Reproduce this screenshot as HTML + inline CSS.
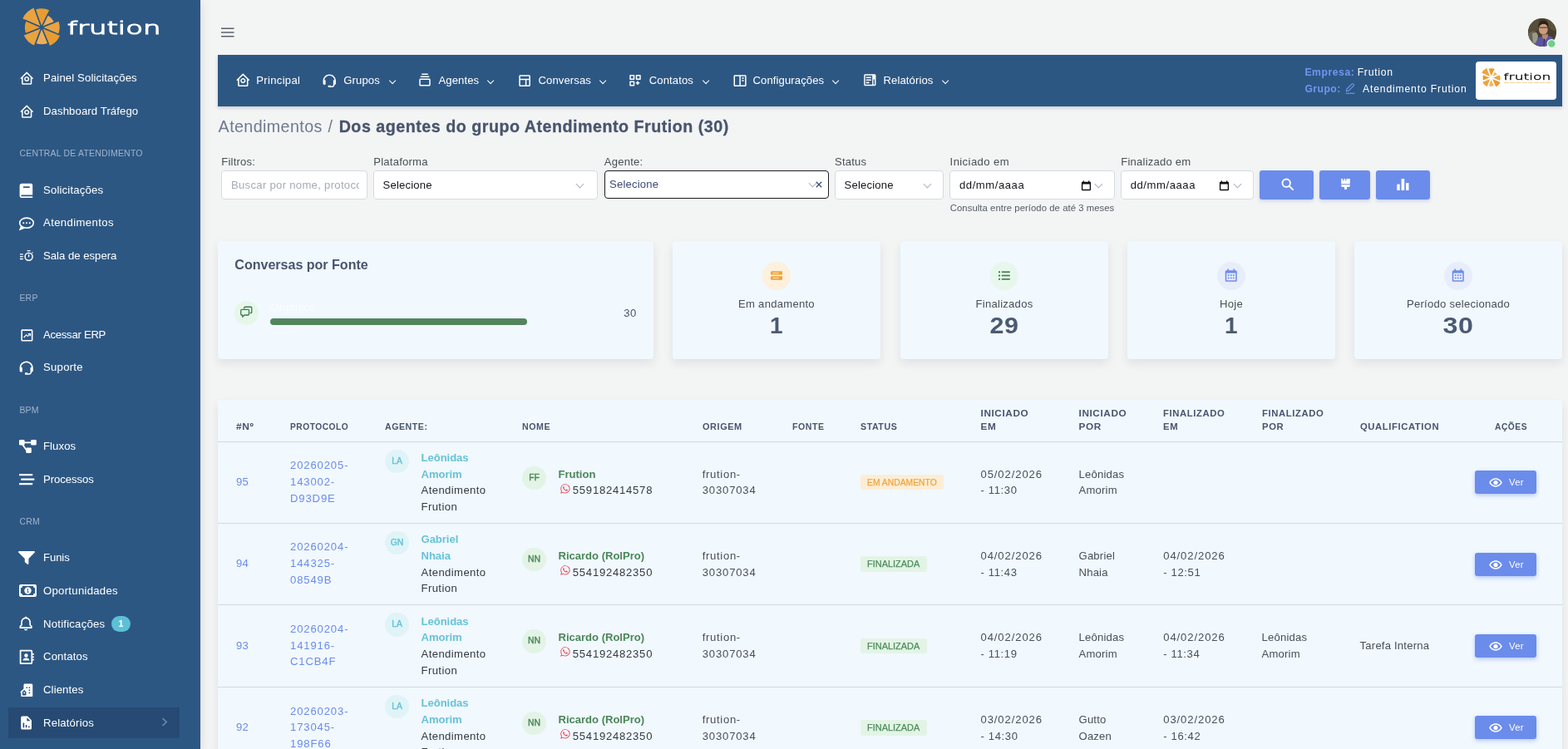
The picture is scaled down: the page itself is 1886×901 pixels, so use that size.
<!DOCTYPE html>
<html lang="pt-BR">
<head>
<meta charset="utf-8">
<title>Atendimentos - Frution</title>
<style>
*{box-sizing:border-box;margin:0;padding:0}
html,body{width:1886px;height:901px;overflow:hidden}
body{background:#f3f4f4;font-family:"Liberation Sans",sans-serif;font-size:13.1px;color:#495057;position:relative;line-height:1.5}
svg{display:block}
.abs{position:absolute}
/* sidebar */
#main,#sidebar{will-change:transform}#sidebar{position:absolute;left:0;top:0;width:241px;height:901px;background:#2d5783;overflow:hidden;box-shadow:0 2px 12px rgba(15,34,58,.13);z-index:2}
.sb-item{position:absolute;left:0;width:241px;height:42px;display:flex;align-items:center;color:#fff;font-size:13.2px;letter-spacing:.1px}
.sb-item .ic{position:absolute;left:22px;top:50%;width:20px;height:20px;margin-top:-10px;fill:#fff}
.sb-item .tx{position:absolute;left:52px;top:50%;transform:translateY(-50%);white-space:nowrap}
.sb-title{position:absolute;left:23.4px;color:#9fb3cc;font-size:10.5px;letter-spacing:.2px;white-space:nowrap;transform:translateY(-50%);margin-top:1px}
.sb-active{position:absolute;left:10px;top:851px;width:206px;height:37px;background:#264a73}
.badge1{position:absolute;left:134px;top:741px;width:23px;height:19px;border-radius:10px;background:#5bc1d7;color:#fff;font-size:10.5px;font-weight:bold;text-align:center;line-height:19px}
/*C1a*/#nav{position:absolute;left:262px;top:66px;width:1617px;height:62px;background:#2d5783;box-shadow:0 2px 4px rgba(20,30,50,.18)}
.nv{position:absolute;top:31px;height:0;color:#fff;font-size:13.100px;white-space:nowrap}
.nv svg{position:absolute;fill:#fff;margin-left:-1.2px}
.nv .t{position:absolute;top:-10.200px;line-height:20px;letter-spacing:.1px}
.chev{position:absolute;top:-3.400px;margin-left:1.2px;width:6.200px;height:6.200px;border-right:1.400px solid #fff;border-bottom:1.400px solid #fff;transform:rotate(45deg) ;transform-origin:center}
#h4{font-size:19.700px;line-height:30px;color:#49556e}
#h4 .lt{color:#6d7a90;letter-spacing:.4px}
#h4 .sl{margin:0 7.400px 0 6.600px}
#h4 b{letter-spacing:.5px;-webkit-text-stroke:.3px #49556e}
/*C1b*/
/*C2a*/.lbl{position:absolute;font-size:13.100px;line-height:20px;color:#495057;white-space:nowrap;letter-spacing:.2px}
.inp{position:absolute;top:205px;height:34.500px;background:#fff;border:1px solid #d5dae2;border-radius:4px}
.inp .ph{position:absolute;top:7.200px;line-height:20px;font-size:13.100px;color:#15161c;white-space:nowrap;letter-spacing:.18px}
.chev.g{margin-left:0;top:11.500px;border-color:#a9b2c0;border-width:1.300px;width:6.800px;height:6.800px}
.btn svg{margin-top:-2px}.btn{position:absolute;top:205px;height:35px;background:#6b8ceb;border-radius:3px;box-shadow:0 2px 4px rgba(107,140,235,.3);display:flex;align-items:center;justify-content:center}
.card{position:absolute;background:#f1f8fe;border-radius:4px;box-shadow:0 5px 12px rgba(15,34,58,.085)}
.card.st{text-align:center}
.ci{position:absolute;left:50%;top:25px;width:34px;height:34px;margin-left:-17px;border-radius:50%;display:flex;align-items:center;justify-content:center}
.cl{position:absolute;left:0;right:0;top:66px;font-size:13.100px;line-height:20px;color:#495057;letter-spacing:.25px}
.cv{position:absolute;left:0;right:0;top:82.800px;font-size:28px;line-height:38px;font-weight:bold;color:#4b5a73;letter-spacing:.5px}
/*C2b*/
/*C3a*/#tbl{position:absolute;left:262px;top:481px;width:1617px;height:431px;background:#f1f8fe;border-radius:4px 4px 0 0;box-shadow:0 5px 12px rgba(15,34,58,.085);overflow:hidden}
.th{position:absolute;bottom:calc(431px - 40.700px);font-size:11.800px;font-weight:bold;color:#49556e;letter-spacing:.6px;line-height:15.800px;white-space:nowrap;transform-origin:0 50%}
.hl{position:absolute;left:0;right:0;height:1px;background:#d4d9e0}
.row{position:absolute;left:0;width:1617px;height:98.400px}
.c{position:absolute;font-size:13.100px;line-height:19.700px;color:#495057;white-space:nowrap;letter-spacing:.2px}
.c.mid{top:50%;transform:translateY(-50%);margin-top:.15px}
.lk{color:#6b8ceb}
.pr{letter-spacing:.86px}
.dt{letter-spacing:.89px}.tm{letter-spacing:.62px}
.og{letter-spacing:.67px}.dg{letter-spacing:.82px}
.agn{color:#68c3d6;letter-spacing:-.05px}
.nmn{color:#4b8759;letter-spacing:-.03px}
.dk{color:#343a40;letter-spacing:.41px}
.ph2{letter-spacing:.75px;color:#343a40}
.av{position:absolute;width:28.500px;height:28.500px;border-radius:50%;font-size:10.400px;font-weight:normal;-webkit-text-stroke:.42px;text-align:center;line-height:28.500px;letter-spacing:0;text-indent:.5px}
.av.ag{background:#e0f4f8;color:#68c3d6}
.av.nm{background:#e3f4e6;color:#4b8759}
.wa{display:inline-block;width:13.800px;height:13.800px;fill:#e8505b;vertical-align:-.2px;margin:0 2.400px 0 1.100px}
.bdg{position:absolute;height:18.600px;line-height:18.600px;padding:0 8.300px;border-radius:3px;font-size:11px;letter-spacing:.3px;white-space:nowrap;-webkit-text-stroke:.25px}
.bw{background:#fdedd6;color:#eea53c;width:100.500px}.bdg span{display:inline-block;transform-origin:0 50%;letter-spacing:0}.bw span{transform:scaleX(.94)}.bs span{transform:scaleX(.995)}.bs{width:79.800px}
.bs{background:#e3f4e6;color:#4b8c5a}
.ver{position:absolute;left:1512px;width:74px;height:27.500px;border-radius:3px;background:#6b8ceb;box-shadow:0 2px 5px rgba(107,140,235,.45);color:#fff;font-size:11.300px}
.ver svg{position:absolute;left:16.800px;top:8.700px;fill:#fff}
.ver span{position:absolute;left:41px;top:.8px;line-height:27.500px;letter-spacing:.3px}
/*C3b*/
</style>
</head>
<body>
<div id="sidebar">
<!--SB0--><svg class="abs" style="left:21.7px;top:5.3px" width="56" height="56" viewBox="-28 -28 56 56"><g stroke="#2d5783" stroke-width="1.55" stroke-linejoin="miter"><path d="M0 0L-23.83 -10.41A26 26 0 0 1 -8.89 -24.43Z" fill="#e9a340"/><path d="M0 0L-8.00 -21.99A23.4 23.4 0 0 1 10.15 -21.09Z" fill="#e89c30"/><path d="M0 0L7.37 -15.32A17 17 0 0 1 15.82 -6.23Z" fill="#ecad58"/><path d="M0 0L20.93 -8.25A22.5 22.5 0 0 1 20.77 8.65Z" fill="#e9a340"/><path d="M0 0L23.08 9.61A25 25 0 0 1 9.61 23.08Z" fill="#e89c30"/><path d="M0 0L8.07 19.39A21 21 0 0 1 -7.53 19.61Z" fill="#ecad58"/><path d="M0 0L-8.60 22.41A24 24 0 0 1 -22.25 8.99Z" fill="#e9a340"/><path d="M0 0L-19.29 7.79A20.8 20.8 0 0 1 -19.06 -8.33Z" fill="#e89c30"/></g></svg>
<svg class="abs" style="left:78px;top:14px" width="120" height="34" viewBox="0 0 120 34"><text x="3" y="27.3" font-family="'DejaVu Sans','Liberation Sans',sans-serif" font-weight="200" font-size="21.8" fill="#fff" textLength="112.5" lengthAdjust="spacingAndGlyphs" stroke="#fff" stroke-width="1.15">frution</text></svg>

<div class="sb-item" style="top:73px"><svg class="ic" viewBox="0 0 24 24" style="left:22.8px;width:18.4px;height:18.4px;margin-top:-9.3px"><path d="M3 13h1v7c0 1.103.897 2 2 2h12c1.103 0 2-.897 2-2v-7h1a1 1 0 0 0 .707-1.707l-9-9a.999.999 0 0 0-1.414 0l-9 9A1 1 0 0 0 3 13zm9-8.586 6 6V20H6v-9.586l6-6z"/><path d="M12 17c2.206 0 4-1.794 4-4s-1.794-4-4-4-4 1.794-4 4 1.794 4 4 4zm0-6c1.084 0 2 .916 2 2s-.916 2-2 2-2-.916-2-2 .916-2 2-2z"/></svg><span class="tx" style="letter-spacing:0.11px">Painel Solicitações</span></div>
<div class="sb-item" style="top:113px"><svg class="ic" viewBox="0 0 24 24" style="left:22.8px;width:18.4px;height:18.4px;margin-top:-9.3px"><path d="M3 13h1v7c0 1.103.897 2 2 2h12c1.103 0 2-.897 2-2v-7h1a1 1 0 0 0 .707-1.707l-9-9a.999.999 0 0 0-1.414 0l-9 9A1 1 0 0 0 3 13zm9-8.586 6 6V20H6v-9.586l6-6z"/><path d="M12 17c2.206 0 4-1.794 4-4s-1.794-4-4-4-4 1.794-4 4 1.794 4 4 4zm0-6c1.084 0 2 .916 2 2s-.916 2-2 2-2-.916-2-2 .916-2 2-2z"/></svg><span class="tx" style="letter-spacing:0.08px">Dashboard Tráfego</span></div>

<div class="sb-title" style="top:184px">CENTRAL DE ATENDIMENTO</div>

<div class="sb-item" style="top:207.6px"><svg class="ic" viewBox="0 0 24 24" style="left:20.9px;width:20.8px;height:20.8px;margin-top:-9.3px"><path d="M6.012 18H21V4a2 2 0 0 0-2-2H6c-1.206 0-3 .799-3 3v14c0 2.201 1.794 3 3 3h15v-2H6.012C5.55 19.988 5 19.805 5 19s.55-.988 1.012-1zM8 6h9v2H8V6z"/></svg><span class="tx" style="letter-spacing:0.15px">Solicitações</span></div>
<div class="sb-item" style="top:247.2px"><svg class="ic" viewBox="0 0 20 17" style="left:21.9px;width:20px;height:17px;margin-top:-7.700px"><ellipse cx="10" cy="7.200" rx="8.300" ry="6.100" fill="none" stroke="#fff" stroke-width="1.600"/><path d="M3 10.800L1.100 15.400c-.2.500.2.900.700.700L7.600 13.700z"/><circle cx="6.300" cy="7.200" r="1.050"/><circle cx="10" cy="7.200" r="1.050"/><circle cx="13.700" cy="7.200" r="1.050"/></svg><span class="tx" style="letter-spacing:0.35px">Atendimentos</span></div>
<div class="sb-item" style="top:286.6px"><svg class="ic" viewBox="0 0 16 13" style="left:24.200px;width:16px;height:13px;margin-top:-6.700px"><circle cx="10.600" cy="7.700" r="4.500" fill="none" stroke="#fff" stroke-width="1.500"/><path d="M8.600 0h4v1.350h-4zM9.950 5h1.300v3.300h-1.300zM14.100 2.900l.9-.9.900.9-.9.900zM0 4.200h3.700v1.350H0zM0 7h3.700v1.350H0zM0 9.800h3.700v1.350H0z"/></svg><span class="tx" style="letter-spacing:-0.02px">Sala de espera</span></div>

<div class="sb-title" style="top:358px">ERP</div>

<div class="sb-item" style="top:382px"><svg class="ic" viewBox="0 0 24 24" style="left:22.6px;width:18.8px;height:18.8px;margin-top:-8.700px"><path d="M3 5v14c0 1.103.897 2 2 2h14c1.103 0 2-.897 2-2V5c0-1.103-.897-2-2-2H5c-1.103 0-2 .897-2 2zm16.001 14H5V5h14l.001 14z"/><path d="M11 10.200l2 2.300 3.300-3.100-.01 1.800h1.700V6.900h-4.300v1.600h1.700L13.100 10.500 11.100 8.100 6.600 12.800l1.300 1.200z" transform="translate(0,2)"/></svg><span class="tx" style="letter-spacing:-0.30px">Acessar ERP</span></div>
<div class="sb-item" style="top:420.6px"><svg class="ic" viewBox="0 0 24 24" style="left:22.200px;width:19.400px;height:19.400px;margin-top:-9px"><path d="M12 2C6.486 2 2 6.486 2 12v4.143C2 17.167 2.897 18 4 18h1a1 1 0 0 0 1-1v-5.143a1 1 0 0 0-1-1h-.908C4.648 6.987 7.978 4 12 4s7.352 2.987 7.908 6.857H19a1 1 0 0 0-1 1V18c0 1.103-.897 2-2 2h-2v-1h-4v3h6c2.206 0 4-1.794 4-4 1.103 0 2-.833 2-1.857V12c0-5.514-4.486-10-10-10z"/></svg><span class="tx" style="letter-spacing:0.23px">Suporte</span></div>

<div class="sb-title" style="top:493px">BPM</div>

<div class="sb-item" style="top:515.5px"><svg class="ic" viewBox="0 0 21 16" style="left:22.6px;width:21px;height:16px;margin-top:-8px"><rect x="0" y="0" width="6.6" height="6.6" rx="1.3"/><rect x="14.2" y="0" width="6.6" height="6.6" rx="1.3"/><rect x="8.2" y="9.4" width="6.6" height="6.6" rx="1.3"/><path d="M5 2.4h11v1.9H5zM3.300 6.2l1.600-.950 4.900 6.900-1.600.950z"/></svg><span class="tx" style="letter-spacing:0.06px">Fluxos</span></div>
<div class="sb-item" style="top:556px"><svg class="ic" viewBox="0 0 20 16" style="left:22.6px;width:20px;height:16px;margin-top:-6.600px"><rect x="0" y="0" width="16.2" height="2.300" rx=".6"/><rect x="2.200" y="5.500" width="16.200" height="2.300" rx=".6"/><rect x="0" y="11" width="16.2" height="2.300" rx=".6"/></svg><span class="tx" style="letter-spacing:-0.08px">Processos</span></div>

<div class="sb-title" style="top:627px">CRM</div>

<div class="sb-item" style="top:649.6px"><svg class="ic" viewBox="0 0 20 16" style="left:22.2px;width:20px;height:16px;margin-top:-7.4px"><path d="M1.2 0h17.600c1 0 1.500 1.100.850 1.850L12.400 9.100V15c0 .7-.8 1.200-1.400.7l-2.800-2.200a1 1 0 0 1-.4-.8V9.100L.35 1.850C-.3 1.100.2 0 1.200 0z"/></svg><span class="tx" style="letter-spacing:-0.12px">Funis</span></div>
<div class="sb-item" style="top:690px"><svg class="ic" viewBox="0 0 21 15" style="left:22.5px;width:21px;height:15px;margin-top:-7.800px"><path fill-rule="evenodd" d="M2 0h17a2 2 0 0 1 2 2v11a2 2 0 0 1-2 2H2a2 2 0 0 1-2-2V2a2 2 0 0 1 2-2zm2.200 1.900A2.300 2.300 0 0 1 1.900 4.200v6.600a2.300 2.300 0 0 1 2.300 2.300h12.600a2.300 2.300 0 0 1 2.300-2.300V4.200a2.300 2.300 0 0 1-2.300-2.300z"/><path fill-rule="evenodd" d="M10.500 3.300a4.200 4.200 0 1 1 0 8.400 4.200 4.200 0 0 1 0-8.400zm-.9 1.900v1h.6v2.600h-.7v1h2.200v-1H11V5.200z"/></svg><span class="tx" style="letter-spacing:0.26px">Oportunidades</span></div>
<div class="sb-item" style="top:730px"><svg class="ic" viewBox="0 0 24 24" style="left:21.100px;width:20.200px;height:20.200px;margin-top:-10.700px"><path d="M19 13.586V10c0-3.217-2.185-5.927-5.145-6.742C13.562 2.520 12.846 2 12 2s-1.562.52-1.855 1.258C7.185 4.074 5 6.783 5 10v3.586l-1.707 1.707A.996.996 0 0 0 3 16v2a1 1 0 0 0 1 1h16a1 1 0 0 0 1-1v-2a.996.996 0 0 0-.293-.707L19 13.586zM19 17H5v-.586l1.707-1.707A.996.996 0 0 0 7 14v-4c0-2.757 2.243-5 5-5s5 2.243 5 5v4c0 .266.105.52.293.707L19 16.414V17zm-7 5a2.980 2.980 0 0 0 2.818-2H9.182A2.980 2.980 0 0 0 12 22z"/></svg><span class="tx" style="letter-spacing:0.21px">Notificações</span></div>
<div class="badge1">1</div>
<div class="sb-item" style="top:768.7px"><svg class="ic" viewBox="0 0 24 24" style="left:22.400px;width:20.600px;height:20.600px;margin-top:-10.200px"><path d="M21 2H6a2 2 0 0 0-2 2v3H2v2h2v2H2v2h2v2H2v2h2v3a2 2 0 0 0 2 2h15a1 1 0 0 0 1-1V3a1 1 0 0 0-1-1zm-1 18H6V4h14v16z" transform="translate(24,0) scale(-1,1)"/><path d="M11 12.500a2.600 2.600 0 1 0 0-5.200 2.600 2.600 0 0 0 0 5.200zM6.500 16.400v.6h9v-.6c0-1.700-2-3.100-4.500-3.100s-4.500 1.400-4.500 3.100z"/></svg><span class="tx" style="letter-spacing:0.11px">Contatos</span></div>
<div class="sb-item" style="top:809px"><svg class="ic" viewBox="0 0 24 24" style="left:22.500px;width:18.600px;height:18.600px;margin-top:-9.400px"><path d="M18.991 2H9.010C7.899 2 7 2.899 7 4.010v5.637l-4.702 4.642A1 1 0 0 0 3 16v5a1 1 0 0 0 1 1h16a1 1 0 0 0 1-1V4.009C21 2.899 20.102 2 18.991 2zm-8.069 13.111V20H5v-5.568l2.987-2.949 2.935 3.003v.625zM13 9h-2V7h2v2zm4 8h-2v-2h2v2zm0-4h-2v-2h2v2zm0-4h-2V7h2v2z"/><path d="M7 15h2v2H7z"/></svg><span class="tx" style="letter-spacing:0.10px">Clientes</span></div>
<div class="sb-active"></div>
<div class="sb-item" style="top:848.600px"><svg class="ic" viewBox="0 0 24 24" style="left:22.400px;width:19.200px;height:19.200px;margin-top:-9.800px"><path d="M18 22a2 2 0 0 0 2-2V8l-6-6H6a2 2 0 0 0-2 2v16a2 2 0 0 0 2 2h12zM13 4l5 5h-5V4zM7 12h2v7H7v-7zm4 3h2v4h-2v-4zm4 2h2v2h-2v-2z" fill-rule="evenodd"/></svg><span class="tx" style="letter-spacing:0.16px">Relatórios</span>
<svg class="abs" style="left:194px;top:14.500px;fill:none;stroke:#6f8bab;stroke-width:1.600" width="8" height="11" viewBox="0 0 8 11"><path d="M1.500 1l4.700 4.500L1.500 10"/></svg></div>
<!--SB1-->
</div>
<div id="main">
<!--M1a--><svg class="abs" style="left:266px;top:32.800px" width="16" height="12" viewBox="0 0 16 12"><path d="M0 .4h15.500v1.500H0zM0 5.200h15.500v1.500H0zM0 10h15.500v1.500H0z" fill="#5a6270"/></svg>

<!-- avatar -->
<svg class="abs" style="left:1838px;top:22px" width="36" height="36" viewBox="0 0 36 36">
<defs><clipPath id="avc"><circle cx="17" cy="17" r="17"/></clipPath></defs>
<g clip-path="url(#avc)">
<rect width="34" height="34" fill="#463d2e"/>
<path d="M0 0h13v12l-5 5-8 1z" fill="#574e39"/>
<path d="M22 0h12v16l-6-2-5-6z" fill="#5a5238"/>
<path d="M0 18l7-3 4 3 1 16H0z" fill="#6a6650"/>
<path d="M5 18l5-1 2 4-1 8-5 1z" fill="#9a9a8c"/>
<path d="M9 34c0-8 3.500-12 9-12.500l3 2 3.500-2.500c5 1 9 5 9.500 13z" fill="#5a559f"/>
<path d="M16.500 20l1.500 4.500 3 1.500 2.500-3 .5-4z" fill="#b98a6c"/>
<ellipse cx="18.300" cy="13" rx="5.400" ry="6.600" fill="#cb9b7d"/>
<path d="M12.300 11.500c-.5-6 3-8.800 6.500-8.800 3.800 0 6.500 3 5.400 8.300-1.200-3-2.500-4-5.500-4.200-3 0-5 1.500-6.400 4.700z" fill="#2a211c"/>
<path d="M13.200 11.200h10.500" stroke="#3a2e2a" stroke-width=".9" fill="none"/>
<path d="M19.500 24.500l-.5 8" stroke="#2a2440" stroke-width=".9" fill="none"/>
</g>
<circle cx="28.200" cy="30.500" r="5.600" fill="#f3f4f4"/><circle cx="28.200" cy="30.500" r="4.300" fill="#6fd088"/>
</svg>

<div id="nav">
 <div class="nv" style="left:22px"><svg viewBox="0 0 24 24" style="left:0;top:-10px;width:18.600px;height:18.600px"><path d="M3 13h1v7c0 1.103.897 2 2 2h12c1.103 0 2-.897 2-2v-7h1a1 1 0 0 0 .707-1.707l-9-9a.999.999 0 0 0-1.414 0l-9 9A1 1 0 0 0 3 13zm9-8.586 6 6V20H6v-9.586l6-6z"/><path d="M12 17c2.206 0 4-1.794 4-4s-1.794-4-4-4-4 1.794-4 4 1.794 4 4 4zm0-6c1.084 0 2 .916 2 2s-.916 2-2 2-2-.916-2-2 .916-2 2-2z"/></svg><span class="t" style="left:24.300px;letter-spacing:.3px">Principal</span></div>
 <div class="nv" style="left:126px"><svg viewBox="0 0 24 24" style="left:.6px;top:-9.300px;width:18.500px;height:18.500px"><path d="M12 2C6.486 2 2 6.486 2 12v4.143C2 17.167 2.897 18 4 18h1a1 1 0 0 0 1-1v-5.143a1 1 0 0 0-1-1h-.908C4.648 6.987 7.978 4 12 4s7.352 2.987 7.908 6.857H19a1 1 0 0 0-1 1V18c0 1.103-.897 2-2 2h-2v-1h-4v3h6c2.206 0 4-1.794 4-4 1.103 0 2-.833 2-1.857V12c0-5.514-4.486-10-10-10z"/></svg><span class="t" style="left:25.300px">Grupos</span><i class="chev" style="left:79.500px"></i></div>
 <div class="nv" style="left:241px"><svg viewBox="0 0 24 24" style="left:.5px;top:-9.600px;width:18px;height:18px"><path d="M19 10H5c-1.103 0-2 .897-2 2v8c0 1.103.897 2 2 2h14c1.103 0 2-.897 2-2v-8c0-1.103-.897-2-2-2zM5 20v-8h14l.002 8H5zM5 6h14v2H5zM7 2h10v2H7z"/></svg><span class="t" style="left:24.500px">Agentes</span><i class="chev" style="left:83.300px"></i></div>
 <div class="nv" style="left:361px"><svg viewBox="0 0 24 24" style="left:.2px;top:-9.400px;width:18.200px;height:18.200px"><path d="M19 3H5c-1.103 0-2 .897-2 2v14c0 1.103.897 2 2 2h14c1.103 0 2-.897 2-2V5c0-1.103-.897-2-2-2zm0 2 .001 4H5V5h14zM5 11h8v8H5v-8zm10 8v-8h4.001l.001 8H15z"/></svg><span class="t" style="left:24.500px">Conversas</span><i class="chev" style="left:97.500px"></i></div>
 <div class="nv" style="left:494px"><svg viewBox="0 0 24 24" style="left:.3px;top:-8.600px;width:18px;height:18px"><path d="M10 3H4a1 1 0 0 0-1 1v6a1 1 0 0 0 1 1h6a1 1 0 0 0 1-1V4a1 1 0 0 0-1-1zM9 9H5V5h4v4zm11-6h-6a1 1 0 0 0-1 1v6a1 1 0 0 0 1 1h6a1 1 0 0 0 1-1V4a1 1 0 0 0-1-1zm-1 6h-4V5h4v4zm-9 4H4a1 1 0 0 0-1 1v6a1 1 0 0 0 1 1h6a1 1 0 0 0 1-1v-6a1 1 0 0 0-1-1zm-1 6H5v-4h4v4zm8-6h-2v2h-2v2h2v2h2v-2h2v-2h-2z" transform="translate(0,-.5)"/></svg><span class="t" style="left:24.800px">Contatos</span><i class="chev" style="left:88.500px"></i></div>
 <div class="nv" style="left:619px"><svg viewBox="0 0 24 24" style="left:.8px;top:-9.300px;width:18.200px;height:18.200px"><path d="M20 3H4c-1.103 0-2 .897-2 2v14c0 1.103.897 2 2 2h16c1.103 0 2-.897 2-2V5c0-1.103-.897-2-2-2zM4 19V5h7v14H4zm9 0V5h7l.001 14H13z"/><path d="M15 7h3v2h-3zm0 4h3v2h-3z"/></svg><span class="t" style="left:24.500px">Configurações</span><i class="chev" style="left:120.300px"></i></div>
 <div class="nv" style="left:776px"><svg viewBox="0 0 24 24" style="left:.1px;top:-9.800px;width:18.600px;height:18.600px"><path d="M19.875 3H4.125C2.953 3 2 3.897 2 5v14c0 1.103.953 2 2.125 2h15.750C21.047 21 22 20.103 22 19V5c0-1.103-.953-2-2.125-2zM16 19H4V5h12zm4 0h-2V11h2z" transform="translate(1,0) scale(.92,1)"/><path d="M6 7h8v2H6zm0 4h8v2H6zm0 4h5v2H6z"/></svg><span class="t" style="left:24.500px">Relatórios</span><i class="chev" style="left:95.200px"></i></div>

 <div class="abs" style="left:1307.400px;top:10.900px;font-size:12.200px;line-height:20.200px;color:#fff;white-space:nowrap;letter-spacing:.1px"><b style="color:#7196f0;letter-spacing:.55px">Empresa:</b><span style="position:absolute;left:63.300px;letter-spacing:.73px">Frution</span><br><b style="color:#7196f0;letter-spacing:.45px">Grupo:</b><span style="position:absolute;left:69.600px;letter-spacing:.83px">Atendimento Frution</span></div>
 <svg class="abs" style="left:1356px;top:33.500px" width="12" height="13" viewBox="0 0 12 13" fill="none" stroke="#7196f0" stroke-width="1.150"><path d="M.6 12.300h10.800" /><path d="M1.300 9.800l.7-2.800 5.900-5.900c.5-.5 1.300-.5 1.800 0l.4.400c.5.500.5 1.300 0 1.800L4.200 9.200z" stroke-linejoin="round"/></svg>
 <div class="abs" style="left:1513px;top:8px;width:97px;height:46px;background:#fff;border-radius:4px">
  <svg class="abs" style="left:4px;top:4.600px" width="29.200" height="29.200" viewBox="-28 -28 56 56"><g stroke="#fff" stroke-width="3" stroke-linejoin="miter"><path d="M0 0L-23.83 -10.41A26 26 0 0 1 -8.89 -24.43Z" fill="#eda43f"/><path d="M0 0L-8.00 -21.99A23.4 23.4 0 0 1 10.15 -21.09Z" fill="#eb9c2e"/><path d="M0 0L7.37 -15.32A17 17 0 0 1 15.82 -6.23Z" fill="#f0b562"/><path d="M0 0L20.93 -8.25A22.5 22.5 0 0 1 20.77 8.65Z" fill="#eda43f"/><path d="M0 0L23.08 9.61A25 25 0 0 1 9.61 23.08Z" fill="#eb9c2e"/><path d="M0 0L8.07 19.39A21 21 0 0 1 -7.53 19.61Z" fill="#f0b562"/><path d="M0 0L-8.60 22.41A24 24 0 0 1 -22.25 8.99Z" fill="#eda43f"/><path d="M0 0L-19.29 7.79A20.8 20.8 0 0 1 -19.06 -8.33Z" fill="#eb9c2e"/></g></svg>
  <svg class="abs" style="left:32px;top:8px" width="62" height="22" viewBox="0 0 62 22"><text x="1.500" y="14.200" font-family="'DejaVu Sans','Liberation Sans',sans-serif" font-weight="200" font-size="11" fill="#111" textLength="57" lengthAdjust="spacingAndGlyphs" stroke="#111" stroke-width=".4">frution</text><path d="M2 17.600h56" stroke="#eda43f" stroke-width=".7" stroke-dasharray="6 1.200" opacity=".8"/></svg>
 </div>
</div>

<div class="abs" id="h4" style="left:262.600px;top:136.500px;white-space:nowrap"><span class="lt">Atendimentos</span><span class="lt sl">/</span><b>Dos agentes do grupo Atendimento Frution (30)</b></div>
<!--M1b-->
<!--M2a--><div class="lbl" style="left:266.300px;top:185px">Filtros:</div>
<div class="lbl" style="left:449.300px;top:185px">Plataforma</div>
<div class="lbl" style="left:726.800px;top:185px">Agente:</div>
<div class="lbl" style="left:1004px;top:185px">Status</div>
<div class="lbl" style="left:1142.600px;top:185px;letter-spacing:.4px">Iniciado em</div>
<div class="lbl" style="left:1348.300px;top:185px">Finalizado em</div>

<div class="inp" style="left:266px;width:175.500px"><span class="ph" style="left:11px;color:#a4acb8;width:154px;overflow:hidden;letter-spacing:.3px">Buscar por nome, protocolo</span></div>
<div class="inp" style="left:449px;width:269.500px"><span class="ph" style="left:10.500px">Selecione</span><i class="chev g" style="left:243.500px"></i></div>
<div class="inp" style="left:726.500px;top:204.500px;width:270.500px;height:34.500px;border:1.600px solid #1d1d22"><span class="ph" style="left:5.500px;top:6.800px;color:#3b4a7c;">Selecione</span><i class="chev g" style="left:246.500px;top:11.300px"></i>
<svg class="abs" style="left:253.300px;top:12.400px" width="8" height="8" viewBox="0 0 8 8"><path d="M.8.800l6.400 6.400M7.200.800L.8 7.200" stroke="#3b4a7c" stroke-width="1.300"/></svg></div>
<div class="inp" style="left:1004px;width:130.800px"><span class="ph" style="left:10.500px">Selecione</span><i class="chev g" style="left:106.500px"></i></div>
<div class="inp" style="left:1142.300px;width:198.500px"><span class="ph" style="left:10.700px;letter-spacing:.55px">dd/mm/aaaa</span>
<svg class="abs" style="left:156.500px;top:10.500px" width="13" height="13" viewBox="0 0 13 13"><path d="M2.600.5h1.500v1.300h4.800V.5h1.500v1.300h.5c.7 0 1.200.5 1.200 1.200v8c0 .7-.5 1.200-1.200 1.200H2.100c-.7 0-1.200-.5-1.200-1.200v-8c0-.7.5-1.200 1.200-1.200h.5zm-.3 4.100v6.200h8.400V4.600z" fill="#111"/></svg><i class="chev g" style="left:174.500px"></i></div>
<div class="inp" style="left:1348.200px;width:159.500px"><span class="ph" style="left:10.500px;letter-spacing:.55px">dd/mm/aaaa</span>
<svg class="abs" style="left:116.500px;top:10.500px" width="13" height="13" viewBox="0 0 13 13"><path d="M2.600.5h1.500v1.300h4.800V.5h1.500v1.300h.5c.7 0 1.200.5 1.200 1.200v8c0 .7-.5 1.200-1.200 1.200H2.100c-.7 0-1.200-.5-1.200-1.200v-8c0-.7.5-1.200 1.200-1.200h.5zm-.3 4.100v6.200h8.400V4.600z" fill="#111"/></svg><i class="chev g" style="left:135.500px"></i></div>
<div class="abs" style="left:1142.800px;top:242.200px;font-size:11.300px;line-height:16px;color:#545b66;white-space:nowrap;letter-spacing:.06px">Consulta entre período de até 3 meses</div>

<div class="btn" style="left:1515px;width:65px"><svg width="15" height="15" viewBox="0 0 15 15" fill="none" stroke="#fff" stroke-width="1.900" style="margin-left:1px"><circle cx="6.200" cy="6.200" r="4.700"/><path d="M9.800 9.800l4.300 4.300" stroke-linecap="round"/></svg></div>
<div class="btn" style="left:1587px;width:61px"><svg width="11" height="13.600" viewBox="0 0 11 14" fill="#fff" style="margin-left:2.400px" preserveAspectRatio="none"><path d="M.2 0h1.900v2.200h1.300V0h1.700v2.200h1.300V0h4.400v6.400H.2z"/><path d="M.2 7.500h10.600v1.300c0 .8-.6 1.400-1.400 1.400H7v1.900c0 .9-.7 1.600-1.500 1.600S4 13 4 12.100v-1.900H1.600C.8 10.200.2 9.600.2 8.800z"/></svg></div>
<div class="btn" style="left:1655px;width:65px"><svg width="15" height="14" viewBox="0 0 15 14" fill="#fff"><rect x=".3" y="6.500" width="3.400" height="7.500" rx=".5"/><rect x="5.600" y="0" width="3.600" height="14" rx=".5"/><rect x="11.100" y="5" width="3.400" height="9" rx=".5"/></svg></div>

<!-- cards -->
<div class="card" style="left:262px;top:290px;width:524px;height:142px">
 <div class="abs" style="left:20.300px;top:17.200px;font-size:16.100px;font-weight:bold;color:#49556e;letter-spacing:-.03px;white-space:nowrap;line-height:22px">Conversas por Fonte</div>
 <div class="abs" style="left:19.500px;top:72px;width:29px;height:29px;border-radius:50%;background:#e6f7ea"></div>
 <svg class="abs" style="left:27.100px;top:78.200px" width="14.500" height="14.500" viewBox="0 0 14 14" fill="none" stroke="#3f7a4d" stroke-width="1.250" stroke-linejoin="round"><path d="M4.600 3.400V2.100c0-.5.400-.9.900-.9h6.900c.5 0 .9.400.9.900v5.200c0 .5-.4.900-.9.900h-1.200"/><path d="M1.600 4.200h7.600c.5 0 .9.400.9.900v4.600c0 .5-.4.900-.9.900H4.900l-2.300 2.200v-2.200h-1c-.5 0-.9-.4-.9-.9V5.100c0-.5.400-.9.900-.9z"/></svg>
 <div class="abs" style="left:63.500px;top:69.800px;font-size:13.100px;color:#fafdff;white-space:nowrap;letter-spacing:.1px">Orgânico</div>
 <div class="abs" style="left:62.800px;top:93px;width:309.200px;height:8px;border-radius:4px;background:#53855d"></div>
 <div class="abs" style="right:20px;top:76.500px;font-size:13.100px;color:#49556e;letter-spacing:.6px">30</div>
</div>

<div class="card st" style="left:809px;top:290px;width:250px;height:142px"><div class="ci" style="background:#fdf0dc"><svg width="14.600" height="11" viewBox="0 0 14 12" fill="#eea33c" preserveAspectRatio="none" style="margin-top:-1.600px"><rect x="0" y=".3" width="14" height="4.700" rx="1.200"/><rect x="0" y="6.900" width="14" height="4.700" rx="1.200"/><rect x="2.300" y="2.200" width="7" height=".9" fill="#fdecd0"/><rect x="2.300" y="8.800" width="7" height=".9" fill="#fdecd0"/></svg></div><div class="cl">Em andamento</div><div class="cv">1</div></div>
<div class="card st" style="left:1083px;top:290px;width:250px;height:142px"><div class="ci" style="background:#e8f7eb"><svg width="14" height="11" viewBox="0 0 14 11" fill="#3f7a4d" style="margin-top:-2px"><rect x="0" y=".2" width="2" height="2" rx=".4"/><rect x="3.800" y=".4" width="10" height="1.600"/><rect x="0" y="4.500" width="2" height="2" rx=".4"/><rect x="3.800" y="4.700" width="10" height="1.600"/><rect x="0" y="8.800" width="2" height="2" rx=".4"/><rect x="3.800" y="9" width="10" height="1.600"/></svg></div><div class="cl">Finalizados</div><div class="cv" style="transform:scaleX(1.09)">29</div></div>
<div class="card st" style="left:1356px;top:290px;width:250px;height:142px"><div class="ci" style="background:#e8edfc"><svg width="15.500" height="16.500" viewBox="0 0 15 16" style="margin-top:-1.500px"><path d="M3.200.5h1.700v1.600h5.200V.5h1.700v1.600h.9c.9 0 1.600.7 1.600 1.600v10c0 .9-.7 1.600-1.600 1.600H2.300c-.9 0-1.600-.7-1.600-1.600v-10c0-.9.700-1.600 1.600-1.600h.9zM2.200 5.400v8.100c0 .2.200.4.400.4h9.800c.2 0 .4-.2.400-.4V5.400z" fill="#6b8ceb" fill-rule="evenodd"/><g fill="#6b8ceb"><rect x="3.700" y="7" width="1.700" height="1.700"/><rect x="6.650" y="7" width="1.700" height="1.700"/><rect x="9.600" y="7" width="1.700" height="1.700"/><rect x="3.700" y="10.200" width="1.700" height="1.700"/><rect x="6.650" y="10.200" width="1.700" height="1.700"/><rect x="9.600" y="10.200" width="1.700" height="1.700"/></g></svg></div><div class="cl">Hoje</div><div class="cv">1</div></div>
<div class="card st" style="left:1629px;top:290px;width:250px;height:142px"><div class="ci" style="background:#e8edfc"><svg width="15.500" height="16.500" viewBox="0 0 15 16" style="margin-top:-1.500px"><path d="M3.200.5h1.700v1.600h5.200V.5h1.700v1.600h.9c.9 0 1.600.7 1.600 1.600v10c0 .9-.7 1.600-1.600 1.600H2.300c-.9 0-1.600-.7-1.600-1.600v-10c0-.9.700-1.600 1.600-1.600h.9zM2.200 5.400v8.100c0 .2.200.4.400.4h9.800c.2 0 .4-.2.400-.4V5.400z" fill="#6b8ceb" fill-rule="evenodd"/><g fill="#6b8ceb"><rect x="3.700" y="7" width="1.700" height="1.700"/><rect x="6.650" y="7" width="1.700" height="1.700"/><rect x="9.600" y="7" width="1.700" height="1.700"/><rect x="3.700" y="10.200" width="1.700" height="1.700"/><rect x="6.650" y="10.200" width="1.700" height="1.700"/><rect x="9.600" y="10.200" width="1.700" height="1.700"/></g></svg></div><div class="cl">Período selecionado</div><div class="cv" style="transform:scaleX(1.15)">30</div></div>
<!--M2b-->
<!--M3a--><div id="tbl"><div class="th" style="left:22px;transform:scaleX(1.02)">#Nº</div><div class="th" style="left:87px;transform:scaleX(0.865)">PROTOCOLO</div><div class="th" style="left:201px;transform:scaleX(0.899)">AGENTE:</div><div class="th" style="left:366px;transform:scaleX(0.901)">NOME</div><div class="th" style="left:582.75px;transform:scaleX(0.929)">ORIGEM</div><div class="th" style="left:690.75px;transform:scaleX(0.897)">FONTE</div><div class="th" style="left:772.5px;transform:scaleX(0.903)">STATUS</div><div class="th" style="left:917.5px;transform:scaleX(1.0)">INICIADO<br>EM</div><div class="th" style="left:1035.5px;transform:scaleX(1.0)">INICIADO<br>POR</div><div class="th" style="left:1137.25px;transform:scaleX(0.96)">FINALIZADO<br>EM</div><div class="th" style="left:1255.5px;transform:scaleX(0.96)">FINALIZADO<br>POR</div><div class="th" style="left:1373.6px;transform:scaleX(0.958)">QUALIFICATION</div><div class="th" style="left:1536.4px;transform:scaleX(0.87)">AÇÕES</div><div class="hl" style="top:49.750px"></div><div class="hl" style="top:147.9px"></div><div class="hl" style="top:246.0px"></div><div class="hl" style="top:344.9px"></div><div class="row" style="top:50.25px">
<div class="c lk" style="left:22px;top:38.6px">95</div>
<div class="c lk pr" style="left:87px;top:19.1px">20260205-<br>143002-<br>D93D9E</div>
<div class="av ag" style="left:201px;top:9.35px">LA</div>
<div class="c" style="left:244.500px;top:9.75px"><b class="agn">Leônidas<br>Amorim</b><br><span class="dk">Atendimento<br>Frution</span></div>
<div class="av nm" style="left:366px;top:29.35px">FF</div>
<div class="c" style="left:409.500px;top:29.45px"><b class="nmn">Frution</b><br><svg class="wa" viewBox="0 0 24 24"><path d="M12.04 2C6.58 2 2.13 6.45 2.13 11.91c0 1.75.46 3.45 1.32 4.95L2.05 22l5.25-1.38c1.45.79 3.08 1.21 4.74 1.21 5.46 0 9.91-4.45 9.91-9.91 0-2.650-1.030-5.140-2.900-7.010A9.820 9.820 0 0 0 12.040 2zm.01 1.670c2.200 0 4.260.860 5.820 2.420a8.230 8.230 0 0 1 2.410 5.830c0 4.540-3.700 8.230-8.240 8.230-1.480 0-2.930-.39-4.190-1.150l-.3-.17-3.120.82.830-3.040-.2-.32a8.190 8.190 0 0 1-1.260-4.380c.010-4.540 3.700-8.240 8.250-8.240z"/><path d="M8.530 7.330c-.16 0-.43.060-.66.310-.22.250-.87.860-.87 2.070 0 1.220.89 2.390 1 2.560.14.170 1.760 2.670 4.250 3.730.59.270 1.050.42 1.410.53.590.19 1.130.16 1.560.1.480-.07 1.460-.6 1.670-1.180.21-.58.210-1.070.15-1.180-.07-.1-.23-.16-.48-.27-.25-.14-1.470-.74-1.690-.82-.23-.08-.37-.12-.56.120-.16.250-.64.810-.78.970-.15.170-.29.190-.53.070-.26-.13-1.060-.39-2-1.230-.74-.66-1.230-1.470-1.380-1.720-.12-.24-.01-.39.110-.5.110-.11.270-.29.370-.44.130-.14.170-.25.250-.41.080-.17.040-.31-.020-.43-.06-.11-.56-1.350-.77-1.840-.2-.48-.4-.42-.56-.43-.14 0-.3-.01-.47-.01z"/></svg><span class="ph2">559182414578</span></div>
<div class="c og" style="left:582.75px;top:29.45px">frution-<br><span class="dg">30307034</span></div>
<div class="bdg bw" style="left:772.750px;top:39.65px"><span>EM ANDAMENTO</span></div>
<div class="c dt" style="left:917.5px;top:29.45px">05/02/2026<br><span class="tm">- 11:30</span></div>
<div class="c " style="left:1035.5px;top:29.45px">Leônidas<br>Amorim</div>


<div class="ver" style="top:34.85px"><svg class="eye" viewBox="0 0 16 11" width="16" height="11"><path d="M8 .3C4.300.3 1.500 2.700.2 5.500 1.500 8.300 4.300 10.700 8 10.700s6.500-2.400 7.800-5.200C14.500 2.700 11.700.3 8 .3zm0 8.900c-3 0-5.100-1.900-6.100-3.700C2.900 3.700 5 1.800 8 1.800s5.100 1.900 6.100 3.700c-1 1.800-3.100 3.700-6.100 3.700z"/><circle cx="8" cy="5.500" r="2.600"/></svg><span>Ver</span></div>
</div>
<div class="row" style="top:148.4px">
<div class="c lk" style="left:22px;top:38.6px">94</div>
<div class="c lk pr" style="left:87px;top:19.1px">20260204-<br>144325-<br>08549B</div>
<div class="av ag" style="left:201px;top:9.35px">GN</div>
<div class="c" style="left:244.500px;top:9.75px"><b class="agn">Gabriel<br>Nhaia</b><br><span class="dk">Atendimento<br>Frution</span></div>
<div class="av nm" style="left:366px;top:29.35px">NN</div>
<div class="c" style="left:409.500px;top:29.45px"><b class="nmn">Ricardo (RolPro)</b><br><svg class="wa" viewBox="0 0 24 24"><path d="M12.04 2C6.58 2 2.13 6.45 2.13 11.91c0 1.75.46 3.45 1.32 4.95L2.05 22l5.25-1.38c1.45.79 3.08 1.21 4.74 1.21 5.46 0 9.91-4.45 9.91-9.91 0-2.650-1.030-5.140-2.900-7.010A9.820 9.820 0 0 0 12.040 2zm.01 1.670c2.200 0 4.260.860 5.820 2.420a8.230 8.230 0 0 1 2.410 5.830c0 4.540-3.700 8.230-8.240 8.230-1.480 0-2.930-.39-4.190-1.150l-.3-.17-3.120.82.830-3.040-.2-.32a8.190 8.190 0 0 1-1.260-4.380c.010-4.540 3.700-8.240 8.250-8.240z"/><path d="M8.530 7.330c-.16 0-.43.060-.66.310-.22.250-.87.860-.87 2.070 0 1.220.89 2.390 1 2.560.14.170 1.760 2.670 4.250 3.730.59.270 1.050.42 1.410.53.590.19 1.130.16 1.560.1.480-.07 1.460-.6 1.670-1.180.21-.58.210-1.070.15-1.180-.07-.1-.23-.16-.48-.27-.25-.14-1.470-.74-1.690-.82-.23-.08-.37-.12-.56.120-.16.250-.64.810-.78.970-.15.170-.29.190-.53.070-.26-.13-1.060-.39-2-1.230-.74-.66-1.230-1.470-1.380-1.720-.12-.24-.01-.39.110-.5.110-.11.270-.29.370-.44.130-.14.170-.25.250-.41.080-.17.040-.31-.020-.43-.06-.11-.56-1.350-.77-1.840-.2-.48-.4-.42-.56-.43-.14 0-.3-.01-.47-.01z"/></svg><span class="ph2">554192482350</span></div>
<div class="c og" style="left:582.75px;top:29.45px">frution-<br><span class="dg">30307034</span></div>
<div class="bdg bs" style="left:772.750px;top:39.65px"><span>FINALIZADA</span></div>
<div class="c dt" style="left:917.5px;top:29.45px">04/02/2026<br><span class="tm">- 11:43</span></div>
<div class="c " style="left:1035.5px;top:29.45px">Gabriel<br>Nhaia</div>
<div class="c dt" style="left:1137.25px;top:29.45px">04/02/2026<br><span class="tm">- 12:51</span></div>

<div class="ver" style="top:35.8px"><svg class="eye" viewBox="0 0 16 11" width="16" height="11"><path d="M8 .3C4.300.3 1.500 2.700.2 5.500 1.500 8.300 4.300 10.700 8 10.700s6.500-2.400 7.800-5.200C14.500 2.700 11.700.3 8 .3zm0 8.900c-3 0-5.100-1.900-6.100-3.700C2.900 3.700 5 1.800 8 1.800s5.100 1.900 6.100 3.700c-1 1.800-3.100 3.700-6.100 3.700z"/><circle cx="8" cy="5.500" r="2.600"/></svg><span>Ver</span></div>
</div>
<div class="row" style="top:246.5px">
<div class="c lk" style="left:22px;top:39.0px">93</div>
<div class="c lk pr" style="left:87px;top:19.5px">20260204-<br>141916-<br>C1CB4F</div>
<div class="av ag" style="left:201px;top:9.75px">LA</div>
<div class="c" style="left:244.500px;top:10.15px"><b class="agn">Leônidas<br>Amorim</b><br><span class="dk">Atendimento<br>Frution</span></div>
<div class="av nm" style="left:366px;top:29.75px">NN</div>
<div class="c" style="left:409.500px;top:29.85px"><b class="nmn">Ricardo (RolPro)</b><br><svg class="wa" viewBox="0 0 24 24"><path d="M12.04 2C6.58 2 2.13 6.45 2.13 11.91c0 1.75.46 3.45 1.32 4.95L2.05 22l5.25-1.38c1.45.79 3.08 1.21 4.74 1.21 5.46 0 9.91-4.45 9.91-9.91 0-2.650-1.030-5.140-2.900-7.010A9.820 9.820 0 0 0 12.040 2zm.01 1.670c2.200 0 4.260.860 5.820 2.420a8.230 8.230 0 0 1 2.410 5.830c0 4.540-3.700 8.230-8.240 8.230-1.480 0-2.930-.39-4.190-1.150l-.3-.17-3.120.82.830-3.040-.2-.32a8.190 8.190 0 0 1-1.260-4.380c.010-4.540 3.700-8.240 8.250-8.240z"/><path d="M8.530 7.330c-.16 0-.43.060-.66.310-.22.250-.87.860-.87 2.070 0 1.220.89 2.390 1 2.560.14.170 1.760 2.670 4.250 3.730.59.270 1.050.42 1.410.53.590.19 1.130.16 1.560.1.480-.07 1.460-.6 1.670-1.180.21-.58.210-1.070.15-1.180-.07-.1-.23-.16-.48-.27-.25-.14-1.470-.74-1.690-.82-.23-.08-.37-.12-.56.120-.16.250-.64.810-.78.970-.15.170-.29.190-.53.070-.26-.13-1.060-.39-2-1.230-.74-.66-1.230-1.470-1.380-1.720-.12-.24-.01-.39.110-.5.110-.11.270-.29.370-.44.130-.14.170-.25.250-.41.080-.17.040-.31-.020-.43-.06-.11-.56-1.350-.77-1.840-.2-.48-.4-.42-.56-.43-.14 0-.3-.01-.47-.01z"/></svg><span class="ph2">554192482350</span></div>
<div class="c og" style="left:582.75px;top:29.85px">frution-<br><span class="dg">30307034</span></div>
<div class="bdg bs" style="left:772.750px;top:40.05px"><span>FINALIZADA</span></div>
<div class="c dt" style="left:917.5px;top:29.85px">04/02/2026<br><span class="tm">- 11:19</span></div>
<div class="c " style="left:1035.5px;top:29.85px">Leônidas<br>Amorim</div>
<div class="c dt" style="left:1137.25px;top:29.85px">04/02/2026<br><span class="tm">- 11:34</span></div>
<div class="c " style="left:1255.5px;top:29.85px">Leônidas<br>Amorim</div>
<div class="c " style="left:1373.6px;top:39.0px">Tarefa Interna</div>
<div class="ver" style="top:35.6px"><svg class="eye" viewBox="0 0 16 11" width="16" height="11"><path d="M8 .3C4.300.3 1.500 2.700.2 5.500 1.500 8.300 4.300 10.700 8 10.700s6.500-2.400 7.800-5.200C14.500 2.700 11.700.3 8 .3zm0 8.900c-3 0-5.100-1.900-6.100-3.700C2.900 3.700 5 1.800 8 1.800s5.100 1.900 6.100 3.700c-1 1.800-3.100 3.700-6.100 3.700z"/><circle cx="8" cy="5.500" r="2.600"/></svg><span>Ver</span></div>
</div>
<div class="row" style="top:345.4px">
<div class="c lk" style="left:22px;top:38.75px">92</div>
<div class="c lk pr" style="left:87px;top:19.25px">20260203-<br>173045-<br>198F66</div>
<div class="av ag" style="left:201px;top:9.5px">LA</div>
<div class="c" style="left:244.500px;top:9.9px"><b class="agn">Leônidas<br>Amorim</b><br><span class="dk">Atendimento<br>Frution</span></div>
<div class="av nm" style="left:366px;top:29.5px">NN</div>
<div class="c" style="left:409.500px;top:29.6px"><b class="nmn">Ricardo (RolPro)</b><br><svg class="wa" viewBox="0 0 24 24"><path d="M12.04 2C6.58 2 2.13 6.45 2.13 11.91c0 1.75.46 3.45 1.32 4.95L2.05 22l5.25-1.38c1.45.79 3.08 1.21 4.74 1.21 5.46 0 9.91-4.45 9.91-9.91 0-2.650-1.030-5.140-2.900-7.010A9.820 9.820 0 0 0 12.040 2zm.01 1.670c2.200 0 4.260.860 5.820 2.420a8.230 8.230 0 0 1 2.410 5.830c0 4.540-3.700 8.230-8.240 8.230-1.480 0-2.930-.39-4.190-1.150l-.3-.17-3.120.82.830-3.040-.2-.32a8.190 8.190 0 0 1-1.260-4.380c.010-4.540 3.700-8.240 8.250-8.240z"/><path d="M8.530 7.330c-.16 0-.43.060-.66.310-.22.250-.87.860-.87 2.070 0 1.220.89 2.390 1 2.560.14.170 1.760 2.670 4.250 3.730.59.270 1.050.42 1.410.53.590.19 1.130.16 1.560.1.480-.07 1.460-.6 1.670-1.180.21-.58.210-1.070.15-1.180-.07-.1-.23-.16-.48-.27-.25-.14-1.470-.74-1.690-.82-.23-.08-.37-.12-.56.120-.16.250-.64.810-.78.970-.15.170-.29.190-.53.070-.26-.13-1.060-.39-2-1.230-.74-.66-1.230-1.470-1.380-1.720-.12-.24-.01-.39.110-.5.110-.11.270-.29.370-.44.130-.14.170-.25.250-.41.080-.17.040-.31-.020-.43-.06-.11-.56-1.350-.77-1.840-.2-.48-.4-.42-.56-.43-.14 0-.3-.01-.47-.01z"/></svg><span class="ph2">554192482350</span></div>
<div class="c og" style="left:582.75px;top:29.6px">frution-<br><span class="dg">30307034</span></div>
<div class="bdg bs" style="left:772.750px;top:39.8px"><span>FINALIZADA</span></div>
<div class="c dt" style="left:917.5px;top:29.6px">03/02/2026<br><span class="tm">- 14:30</span></div>
<div class="c " style="left:1035.5px;top:29.6px">Gutto<br>Oazen</div>
<div class="c dt" style="left:1137.25px;top:29.6px">03/02/2026<br><span class="tm">- 16:42</span></div>

<div class="ver" style="top:34.9px"><svg class="eye" viewBox="0 0 16 11" width="16" height="11"><path d="M8 .3C4.300.3 1.500 2.700.2 5.500 1.500 8.300 4.300 10.700 8 10.700s6.500-2.400 7.800-5.200C14.500 2.700 11.700.3 8 .3zm0 8.900c-3 0-5.100-1.900-6.100-3.700C2.900 3.700 5 1.800 8 1.800s5.100 1.900 6.100 3.700c-1 1.800-3.100 3.700-6.100 3.700z"/><circle cx="8" cy="5.500" r="2.600"/></svg><span>Ver</span></div>
</div></div><!--M3b-->
<!--MAIN-->
</div>
</body>
</html>
